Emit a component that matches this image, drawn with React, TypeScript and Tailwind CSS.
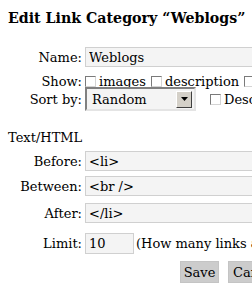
import React from "react";

const serif = { fontFamily: '"DejaVu Serif", serif' };

function Box() {
  return (
    <span className="inline-block w-[11px] h-[11px] border border-[#7a7a7a] border-r-[#d4d4d4] border-b-[#d4d4d4] bg-white shrink-0" />
  );
}

function Row({ label, children, cls = "" }: { label: string; children: React.ReactNode; cls?: string }) {
  return (
    <div className={"flex items-center " + cls}>
      <div className="w-[84px] shrink-0 text-right pr-[2px] whitespace-nowrap">{label}</div>
      <div className="flex items-center whitespace-nowrap pl-[1px]">{children}</div>
    </div>
  );
}

const inputCls =
  "w-[200px] h-[20px] px-[3px] bg-[#f4f4f4] border border-[#d0d0d0] text-[13px] outline-none shrink-0";

export default function App() {
  return (
    <div className="w-[252px] h-[285px] overflow-hidden bg-white text-[#000] text-[13px] leading-[15px]" style={serif}>
      <div className="pl-[8px] pt-[10px]">
        <h2 className="text-[14.2px] font-bold leading-[16px] whitespace-nowrap">Edit Link Category “Weblogs”</h2>
      </div>
      <div className="mt-[21px] flex flex-col">
        <Row label="Name:">
          <input readOnly value="Weblogs" className={inputCls} style={serif} />
        </Row>
        <Row label="Show:" cls="mt-[8px] h-[12px]">
          <Box />
          <span className="ml-[3px] mr-[5px]">images</span>
          <Box />
          <span className="ml-[3px] mr-[5px]">description</span>
          <Box />
        </Row>
        <Row label="Sort by:" cls="h-[24px]">
          <div className="w-[111px] h-[24px] shrink-0 flex items-center border-2 border-[#808080] border-r-[#e4e4e4] border-b-[#e4e4e4] bg-[#f4f4f4]">
            <span className="flex-1 pl-[5px]">Random</span>
            <span className="w-[16px] h-[17px] mr-[2px] bg-[#d4d0c8] border border-white border-r-[#404040] border-b-[#404040] flex items-center justify-center">
              <svg width="7" height="4" viewBox="0 0 7 4"><path d="M0 0H7L3.5 4Z" fill="#000" /></svg>
            </span>
          </div>
          <span className="ml-[14px] flex"><Box /></span>
          <span className="ml-[3px]">Descending</span>
        </Row>
        <div className="pl-[8px] mt-[19px]">Text/HTML</div>
        <Row label="Before:" cls="mt-[6px]">
          <input readOnly value="<li>" className={inputCls} style={serif} />
        </Row>
        <Row label="Between:" cls="mt-[5px]">
          <input readOnly value="<br />" className={inputCls} style={serif} />
        </Row>
        <Row label="After:" cls="mt-[7px]">
          <input readOnly value="</li>" className={inputCls} style={serif} />
        </Row>
        <Row label="Limit:" cls="mt-[10px]">
          <input readOnly value="10" className="w-[49px] h-[21px] px-[3px] bg-[#f4f4f4] border border-[#d0d0d0] text-[13px] outline-none shrink-0" style={serif} />
          <span className="ml-[2px]">(How many links are shown)</span>
        </Row>
        <div className="flex mt-[7px] pl-[180px] gap-[9px] whitespace-nowrap">
          <button className="w-[39px] h-[22px] shrink-0 bg-[#ccc] border border-[#c4c4c4] text-[13px]" style={serif}>Save</button>
          <button className="h-[22px] shrink-0 px-[4px] bg-[#ccc] border border-[#c4c4c4] text-[13px]" style={serif}>Cancel</button>
        </div>
      </div>
    </div>
  );
}
